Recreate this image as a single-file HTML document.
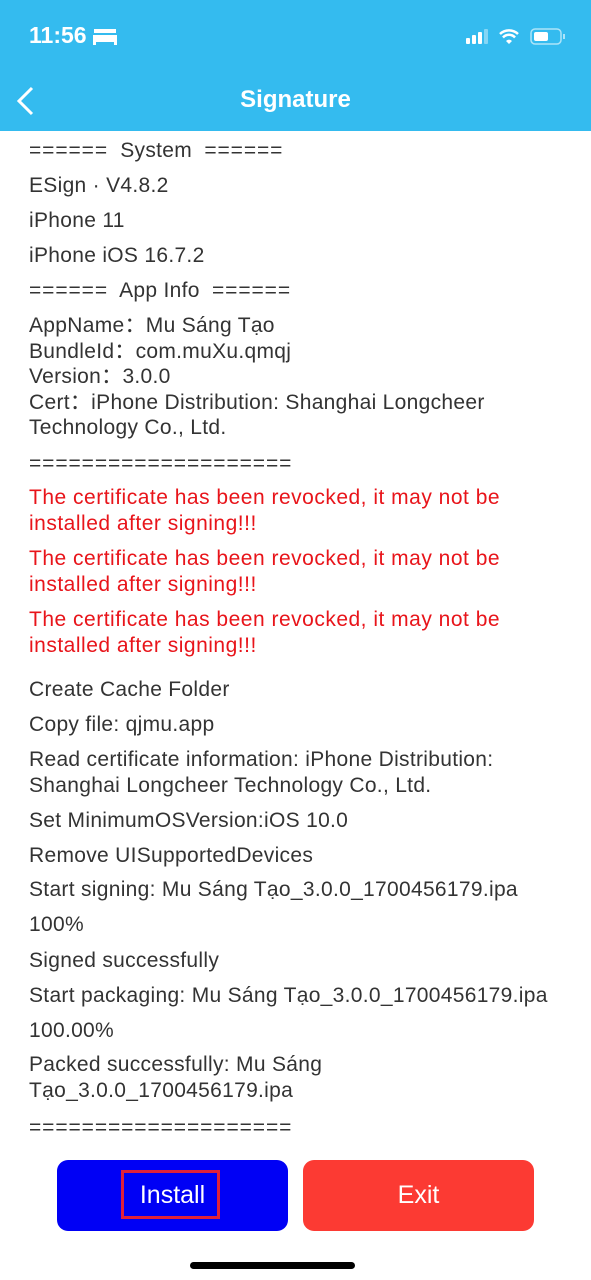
<!DOCTYPE html>
<html><head><meta charset="utf-8"><style>
body{margin:0;width:591px;height:1280px;position:relative;background:#fff;font-family:"Liberation Sans","Noto Sans CJK SC",sans-serif;overflow:hidden}
.hdr{position:absolute;left:0;top:0;width:591px;height:131px;background:#34bbef;color:#fff}
.l{position:absolute;left:29px;font-size:21px;letter-spacing:0.3px;line-height:25.5px;color:#333;white-space:nowrap}
.e{letter-spacing:0.9px}
.r{color:#e8141a;letter-spacing:0.5px}
.btn{position:absolute;top:1160px;height:71px;width:231px;border-radius:11px;color:#fff;font-size:25px;text-align:center;line-height:71px}
</style></head><body>
<div class="hdr">
<div style="position:absolute;left:29px;top:22px;font-size:23px;font-weight:bold">11:56</div>
<svg style="position:absolute;left:93px;top:27px" width="24" height="18"><rect x="1" y="2" width="22" height="4" fill="#fff"/><rect x="0" y="8" width="24" height="7" fill="#fff"/><rect x="0" y="14" width="3" height="4" fill="#fff"/><rect x="21" y="14" width="3" height="4" fill="#fff"/></svg>
<svg style="position:absolute;left:466px;top:28px" width="100" height="18">
<rect x="0" y="10" width="4" height="6" rx="1" fill="#fff"/><rect x="6" y="7" width="4" height="9" rx="1" fill="#fff"/><rect x="12" y="4" width="4" height="12" rx="1" fill="#fff"/><rect x="18" y="1" width="4" height="15" rx="1" fill="#fff" opacity=".4"/>
<path d="M34 6a13 13 0 0 1 18 0M37 9.5a8 8 0 0 1 12 0" stroke="#fff" stroke-width="2.5" fill="none"/><path d="M40 13l3 3 3-3a4 4 0 0 0-6 0z" fill="#fff"/>
<rect x="65" y="1" width="30" height="15" rx="4" fill="none" stroke="#fff" stroke-opacity=".6" stroke-width="1.5"/><rect x="68" y="4" width="14" height="9" rx="2" fill="#fff"/><rect x="97" y="6" width="2" height="5" fill="#fff" opacity=".6"/>
</svg>
<svg style="position:absolute;left:15px;top:86px" width="22" height="30"><path d="M17 2L4 15l13 13" stroke="#fff" stroke-width="3" fill="none"/></svg>
<div style="position:absolute;left:0;width:591px;top:86px;text-align:center;font-size:24px;font-weight:bold">Signature</div>
</div>
<div class="l" style="top:138px"><span class="e">======</span>&nbsp; System&nbsp; <span class="e">======</span></div>
<div class="l" style="top:173px">ESign · V4.8.2</div>
<div class="l" style="top:208px">iPhone 11</div>
<div class="l" style="top:243px">iPhone iOS 16.7.2</div>
<div class="l" style="top:278px"><span class="e">======</span>&nbsp; App Info&nbsp; <span class="e">======</span></div>
<div class="l" style="top:313px">AppName：Mu Sáng Tạo<br>BundleId：com.muXu.qmqj<br>Version：3.0.0<br>Cert：iPhone Distribution: Shanghai Longcheer<br>Technology Co., Ltd.</div>
<div class="l e" style="top:451px">====================</div>
<div class="l r" style="top:485px">The certificate has been revocked, it may not be<br>installed after signing!!!</div>
<div class="l r" style="top:546px">The certificate has been revocked, it may not be<br>installed after signing!!!</div>
<div class="l r" style="top:607px">The certificate has been revocked, it may not be<br>installed after signing!!!</div>
<div class="l" style="top:677px">Create Cache Folder</div>
<div class="l" style="top:712px">Copy file: qjmu.app</div>
<div class="l" style="top:747px">Read certificate information: iPhone Distribution:<br>Shanghai Longcheer Technology Co., Ltd.</div>
<div class="l" style="top:808px">Set MinimumOSVersion:iOS 10.0</div>
<div class="l" style="top:843px">Remove UISupportedDevices</div>
<div class="l" style="top:877px">Start signing: Mu Sáng Tạo_3.0.0_1700456179.ipa</div>
<div class="l" style="top:912px">100%</div>
<div class="l" style="top:948px">Signed successfully</div>
<div class="l" style="top:983px">Start packaging: Mu Sáng Tạo_3.0.0_1700456179.ipa</div>
<div class="l" style="top:1018px">100.00%</div>
<div class="l" style="top:1052px">Packed successfully: Mu Sáng<br>Tạo_3.0.0_1700456179.ipa</div>
<div class="l e" style="top:1115px">====================</div>
<div class="btn" style="left:57px;background:#0000f5">Install</div>
<div style="position:absolute;left:121px;top:1170px;width:93px;height:43px;border:3px solid #e0213a"></div>
<div class="btn" style="left:303px;background:#fc3a33">Exit</div>
<div style="position:absolute;left:190px;top:1262px;width:165px;height:7px;border-radius:4px;background:#000"></div>
</body></html>
